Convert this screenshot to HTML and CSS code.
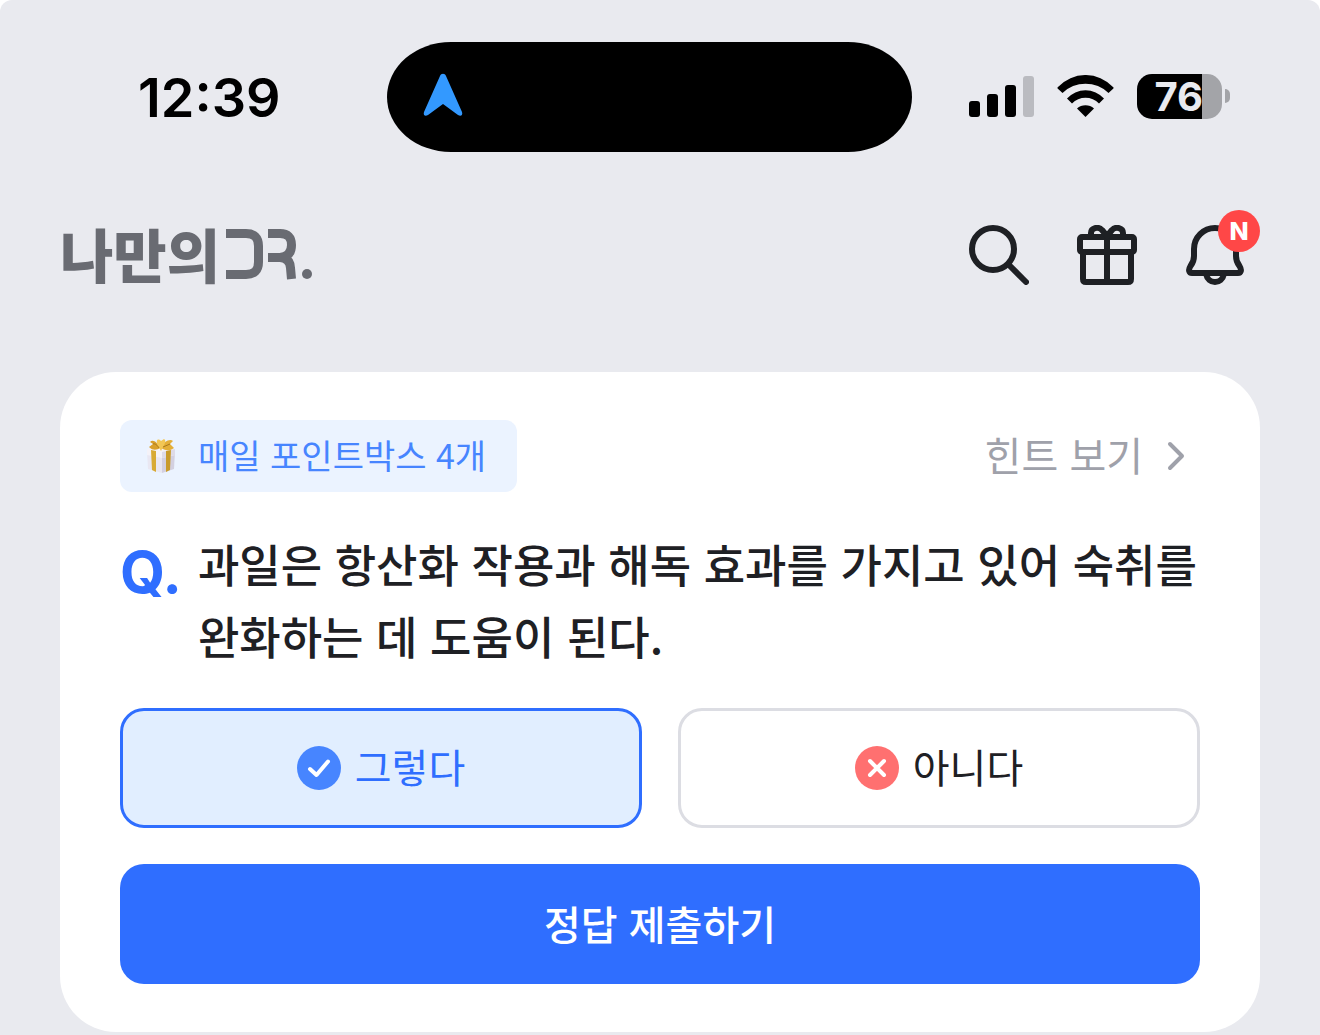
FILE: index.html
```html
<!DOCTYPE html>
<html lang="ko">
<head>
  <meta charset="UTF-8" />
  <meta name="viewport" content="width=device-width, initial-scale=1.0" />
  <title>나만의 DR.</title>
  <link rel="stylesheet" href="styles.css">
</head>
<body>
  <div class="status-bar">
    <div class="time">12:39</div>
    <div class="island">
      <svg width="40" height="44" viewBox="0 0 40 44" aria-hidden="true">
        <path d="M17 3c1-3 5-3 6 0l16 36c1 3-1 5-4 3L20 31 5 42c-3 2-5 0-4-3z" fill="#3399ff"/>
      </svg>
    </div>
    <div class="indicators">
      <svg width="65" height="41" viewBox="0 0 65 41" aria-hidden="true">
        <rect x="0" y="25" width="11" height="16" rx="3"/>
        <rect x="18" y="18" width="11" height="23" rx="3"/>
        <rect x="36" y="9" width="11" height="32" rx="3"/>
        <rect x="54" y="0" width="11" height="41" rx="3" fill="#babbc0"/>
      </svg>
      <svg width="57" height="42" viewBox="0 0 57 42" aria-hidden="true">
        <path d="M.6 13.5Q0 12.600 1 12A37.500 37.500 0 0 1 56 12Q57 12.600 56.400 13.500L51.500 18A33 33 0 0 0 5.500 18Z"/>
        <path d="M10 23.500A25 25 0 0 1 47 23.500L42 28.500A19 19 0 0 0 15 28.500Z"/>
        <path d="M20 33.500A13 13 0 0 1 37 33.500L28.500 42Z"/>
      </svg>
      <div class="battery"><span class="battery-level">76</span></div>
    </div>
  </div>

  <header class="header">
    <a class="logo" href="#" aria-label="나만의 DR.">
      <span>나만의</span>
      <svg width="90" height="56" viewBox="0 0 90 56" fill="none" stroke="#696b72" stroke-width="9" aria-hidden="true">
        <path d="M2 8.500H22Q34.500 8.500 34.500 21V37Q34.500 49.500 22 49.500H2"/>
        <path d="M44 8.500H56Q67.500 8.500 67.500 20T56 32.500H44M56 32.500Q66 33 66.500 43L67.500 54"/>
        <circle cx="83" cy="49" r="5" fill="#696b72" stroke="none"/>
      </svg>
    </a>
    <nav class="actions">
      <button class="icon-button" aria-label="검색">
        <svg width="60" height="60" viewBox="0 0 60 60">
          <circle cx="24" cy="24" r="21"/>
          <path d="M40 40 57 57"/>
        </svg>
      </button>
      <button class="icon-button" aria-label="선물">
        <svg width="60" height="60" viewBox="0 0 60 60">
          <rect x="3" y="12" width="54" height="15" rx="2"/>
          <path d="M6 27V54Q6 57 9 57H51Q54 57 54 54V27M30 12V57"/>
          <path d="M14 11V8C14 3 21 1 25 5L30 11 35 5C39 1 46 3 46 8V11"/>
        </svg>
      </button>
      <button class="icon-button" aria-label="알림">
        <svg width="60" height="60" viewBox="0 0 60 60">
          <path d="M9 24A21 21 0 0 1 51 24V31C51 36 52 38 54.500 41C57 45 56 48 53 48H7C4 48 3 45 5.500 41C8 38 9 36 9 31Z"/>
          <path d="M21 49C22 54 26 57 30 57S38 54 39 49"/>
        </svg>
        <span class="new-badge">N</span>
      </button>
    </nav>
  </header>

  <main class="quiz-card">
    <div class="quiz-top">
      <div class="point-tag">
        <svg width="30" height="36" viewBox="0 0 30 36" aria-hidden="true">
          <path d="M1 13 16 16V35L2 31Z" fill="#e9e7f2"/>
          <path d="M16 16 29 13 28 31 16 35Z" fill="#d3d0e0"/>
          <path d="M1 11 15 8 29 11V17L16 20 1 17Z" fill="#f4f2f8"/>
          <path d="M16 14 29 11V17L16 20Z" fill="#dedbe8"/>
          <path d="M5 12 10 13V34L6 32Z" fill="#d8aa35"/>
          <path d="M20 13 25 12 24 32 20 34Z" fill="#c99b2b"/>
          <path d="M14 10C11 4 7 1 4 4L7 6 3 9C7 13 11 12 14 10Z" fill="#d9a02c"/>
          <path d="M15 10C17 4 24 0 27 3L24 6 28 10C23 14 18 12 15 10Z" fill="#e3ae38"/>
          <path d="M12 8C9 2 12 0 15 3L18 1C21 3 18 7 17 9L15 13Z" fill="#f2c655"/>
          <path d="M7 6C9 5 12 8 13 10M17 9 24 6" fill="none" stroke="#a9781c" stroke-width="1"/>
        </svg>
        <span>매일 포인트박스 4개</span>
      </div>
      <a class="hint-link" href="#">
        힌트 보기
        <svg width="48" height="48" viewBox="0 0 48 48" aria-hidden="true">
          <path d="M18 12 30 24 18 36" fill="none" stroke="#9fa1aa" stroke-width="4" stroke-linecap="round" stroke-linejoin="round"/>
        </svg>
      </a>
    </div>

    <form class="quiz-form">
      <div class="question">
        <span class="q-mark">Q.</span>
        <p id="question">과일은 항산화 작용과 해독 효과를 가지고 있어 숙취를 완화하는 데 도움이 된다.</p>
      </div>

      <div class="options" role="radiogroup" aria-labelledby="question">
        <label class="option">
          <input type="radio" name="answer" value="yes" checked>
          <svg width="44" height="44" viewBox="0 0 44 44" aria-hidden="true">
            <circle cx="22" cy="22" r="22" fill="#4785ff"/>
            <path d="M13 23 19.500 29 31 15.500" fill="none" stroke="#fff" stroke-width="4" stroke-linecap="round" stroke-linejoin="round"/>
          </svg>
          <span>그렇다</span>
        </label>
        <label class="option">
          <input type="radio" name="answer" value="no">
          <svg width="44" height="44" viewBox="0 0 44 44" aria-hidden="true">
            <circle cx="22" cy="22" r="22" fill="#ff7070"/>
            <path d="M15 15 29 29M29 15 15 29" fill="none" stroke="#fff" stroke-width="4" stroke-linecap="round"/>
          </svg>
          <span>아니다</span>
        </label>
      </div>

      <button class="submit-button" type="button">정답 제출하기</button>
    </form>
  </main>
</body>
</html>
```
FILE: styles.css
```css
:root {
  --bg: #e9eaef;
  --blue: #2f6eff;
  --text: #1e2024;
  --gray: #9fa1aa;
  --font-text: 'Noto Sans CJK KR', sans-serif;
  --font-num: 'Inter', sans-serif;
}

* {
  box-sizing: border-box;
}

html {
  background-color: #fff;
}

body {
  margin: 0;
  min-height: 100vh;
  background-color: var(--bg);
  border-radius: 12px 12px 0 0;
  color: var(--text);
  font-family: var(--font-text);
}

svg {
  display: block;
  flex-shrink: 0;
}

button {
  font-family: inherit;
  border: none;
  cursor: pointer;
}

a {
  text-decoration: none;
}

/* status bar */
.status-bar {
  display: grid;
  grid-template-columns: 1fr 525px 1fr;
  align-items: center;
  padding: 42px 21px 0 0;
  color: #000;
  font-family: var(--font-num);
}

.time {
  padding: 2px 0 0 138px;
  font-size: 54px;
  font-weight: 600;
  line-height: 64px;
}

.island {
  height: 110px;
  padding: 0 36px 4px;
  border-radius: 64px / 55px;
  background-color: #000;
  display: flex;
  align-items: center;
}

.indicators {
  display: flex;
  align-items: center;
  justify-content: flex-end;
  gap: 23px;
  padding: 0 77px 2px 0;
}

.battery {
  position: relative;
  width: 85px;
  height: 45px;
  border-radius: 15px;
  background: linear-gradient(to right, #000 65px, #a3a4a8 65px);
}

.battery::after {
  content: "";
  position: absolute;
  left: 88px;
  top: 15px;
  width: 5px;
  height: 14px;
  border-radius: 0 5px 5px 0;
  background-color: #a3a4a8;
}

.battery-level {
  display: block;
  width: 66px;
  text-align: right;
  color: var(--bg);
  font-size: 40px;
  font-weight: 700;
  line-height: 46px;
}

/* app header */
.header {
  display: flex;
  align-items: center;
  justify-content: space-between;
  padding: 73px 75px 0 60px;
}

.logo {
  display: flex;
  gap: 4px;
  color: #696b72;
  font-size: 58px;
  font-weight: 900;
  line-height: 56px;
}

.logo span {
  height: 60px;
}

.actions {
  display: flex;
  gap: 48px;
}

.icon-button {
  position: relative;
  padding: 0;
  background: none;
}

.icon-button svg {
  fill: none;
  stroke: var(--text);
  stroke-width: 6;
  stroke-linecap: round;
  stroke-linejoin: round;
}

.new-badge {
  position: absolute;
  top: -15px;
  right: -15px;
  width: 42px;
  height: 42px;
  border-radius: 50%;
  background-color: #ff4747;
  color: #fff;
  font-family: var(--font-num);
  font-size: 25px;
  font-weight: 800;
  line-height: 42px;
  text-align: center;
}

/* quiz */
.quiz-card {
  margin: 87px 60px 0;
  padding: 48px 60px;
  border-radius: 56px;
  background-color: #fff;
}

.quiz-top {
  display: flex;
  align-items: center;
  justify-content: space-between;
}

.point-tag {
  display: flex;
  align-items: center;
  gap: 22px;
  height: 72px;
  padding: 0 31px 0 26px;
  border-radius: 12px;
  background-color: #ebf3ff;
  color: #4785ff;
  font-size: 34px;
}

.point-tag span,
.option span {
  padding-bottom: 4px;
}

.hint-link {
  display: flex;
  gap: 9px;
  color: var(--gray);
  font-size: 40px;
  line-height: 44px;
}

.quiz-form {
  display: flex;
  flex-direction: column;
  gap: 36px;
  margin-top: 36px;
}

.question {
  display: flex;
  gap: 16px;
  font-size: 45px;
  font-weight: 500;
  line-height: 72px;
}

.question p {
  flex: 1;
  margin: 0;
}

.q-mark {
  padding-top: 8px;
  color: var(--blue);
  font-family: var(--font-num);
  font-size: 58px;
  font-weight: 700;
}

.options {
  display: grid;
  grid-template-columns: 1fr 1fr;
  gap: 36px;
}

.option {
  position: relative;
  display: flex;
  align-items: center;
  justify-content: center;
  gap: 14px;
  height: 120px;
  border: 3px solid #dcdde3;
  border-radius: 24px;
  font-size: 40px;
  cursor: pointer;
}

.option input {
  position: absolute;
  inset: 0;
  margin: 0;
  opacity: 0;
}

.option:has(input:checked) {
  border-color: var(--blue);
  background-color: #e1eeff;
  color: var(--blue);
}

.submit-button {
  height: 120px;
  padding-bottom: 4px;
  border-radius: 24px;
  background-color: var(--blue);
  color: #fff;
  font-size: 40px;
  font-weight: 500;
}
```
